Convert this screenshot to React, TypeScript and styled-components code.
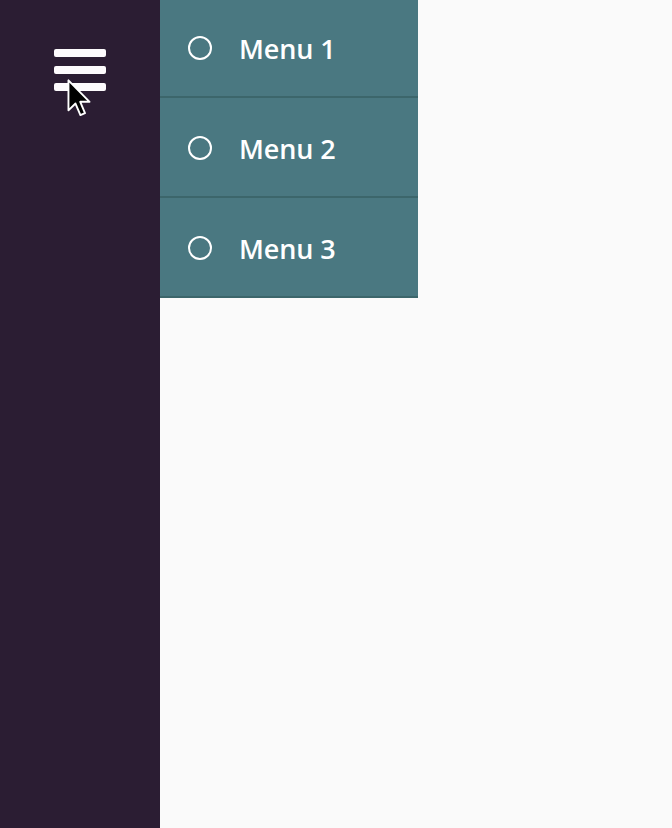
import { createGlobalStyle, styled } from "styled-components";

const GlobalStyle = createGlobalStyle`
  html, body {
    margin: 0;
    padding: 0;
    background: #fafafa;
    font-family: "Open Sans", "Liberation Sans", sans-serif;
  }
`;

const Layout = styled.div`
  display: flex;
  align-items: flex-start;
  min-height: 100vh;
`;

const Sidebar = styled.aside`
  position: relative;
  width: 160px;
  height: 100vh;
  flex-shrink: 0;
  background: #2b1d33;
  display: flex;
  justify-content: center;
  padding-top: 49px;
  box-sizing: border-box;
`;

const Burger = styled.button`
  display: flex;
  flex-direction: column;
  gap: 9px;
  padding: 0;
  border: none;
  background: none;
  height: fit-content;
  cursor: pointer;
`;

const Bar = styled.span`
  display: block;
  width: 52px;
  height: 8px;
  border-radius: 2px;
  background: #fdfbfd;
`;

const Cursor = styled.svg`
  position: absolute;
  left: 67px;
  top: 79px;
`;

const Menu = styled.nav`
  width: 258px;
  margin-top: -2px;
  display: flex;
  flex-direction: column;
`;

const MenuItem = styled.a`
  height: 100px;
  box-sizing: border-box;
  display: flex;
  align-items: center;
  padding: 2px 0 0 28px;
  background: #4a7881;
  border-bottom: 2px solid #3c666b;
  color: #fff;
  text-decoration: none;
  font-size: 27px;
  font-weight: 600;
  letter-spacing: -0.1px;
`;

const Dot = styled.span`
  width: 20px;
  height: 20px;
  border: 2px solid #fff;
  border-radius: 50%;
  margin-right: 27px;
  flex-shrink: 0;
`;

const items = ["Menu 1", "Menu 2", "Menu 3"];

export default function App() {
  return (
    <>
      <GlobalStyle />
      <Layout>
        <Sidebar>
          <Burger aria-label="menu">
            <Bar />
            <Bar />
            <Bar />
          </Burger>
          <Cursor width="24" height="38" viewBox="0 0 12.5 20">
            <path
              d="M0.7 0.7 L0.7 16.5 L4.4 12.9 L7 19 L9.4 18 L6.9 12 L11.8 12 Z"
              fill="#000"
              stroke="#fff"
              strokeWidth="1"
              strokeLinejoin="round"
            />
          </Cursor>
        </Sidebar>
        <Menu>
          {items.map((label) => (
            <MenuItem key={label} href="#">
              <Dot />
              {label}
            </MenuItem>
          ))}
        </Menu>
      </Layout>
    </>
  );
}
